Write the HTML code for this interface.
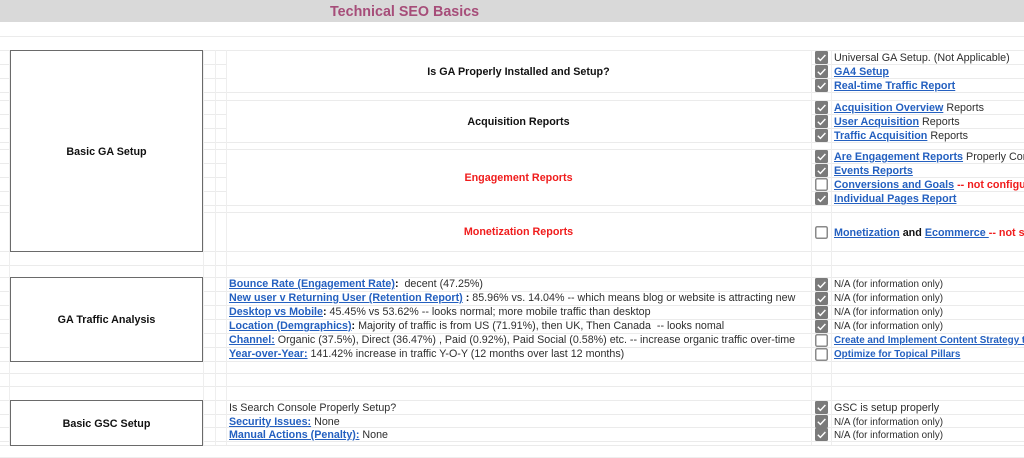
<!DOCTYPE html>
<html><head><meta charset="utf-8"><title>Technical SEO Basics</title>
<style>
html,body{margin:0;padding:0;width:1024px;height:458px;overflow:hidden;background:#fff}
body{position:relative;font-family:"Liberation Sans",sans-serif;font-size:10.75px;color:#2e2e2e;filter:blur(.3px)}
.h,.v,.box,.t,.c{position:absolute}
.h{height:1px;background:#ebebeb}
.v{width:1px;background:#eeeeee;top:50px;height:395px}
.box{left:10px;width:191px;border:1px solid #6a6a6a;background:#fff;text-align:center;font-weight:bold;color:#111;display:flex;align-items:center;justify-content:center;box-sizing:content-box}
.t{height:14px;line-height:14px;white-space:nowrap;margin-top:1px}
.l{left:229px;font-size:10.71px}
.r{left:834px}
.m{left:226px;width:585px;text-align:center;font-weight:bold;color:#111}
.s{font-size:9.87px;margin-top:2px}
a{color:#2460c0;text-decoration:underline;font-weight:bold}
.red{color:#f01c1c;font-weight:bold}
b{color:#111}
.c{left:815px;width:13px;height:13px}
</style></head><body>
<svg width="0" height="0" style="position:absolute"><defs>
<symbol id="on" viewBox="0 0 13 13"><rect width="13" height="13" rx="1.5" fill="#7a7a7a"/><path d="M2.8 6.8l2.6 2.6 5-5.4" fill="none" stroke="#fff" stroke-width="1.4"/></symbol>
<symbol id="off" viewBox="0 0 13 13"><rect x=".75" y=".75" width="11.5" height="11.5" rx="1.5" fill="#fff" stroke="#8a8a8a" stroke-width="1.5"/></symbol>
</defs></svg>

<div style="position:absolute;left:0;top:0;width:1024px;height:22px;background:#d9d9d9"></div>
<div class="t" style="left:330px;top:3px;height:16px;line-height:16px;font-size:14.3px;font-weight:bold;color:#a64d79">Technical SEO Basics</div>

<div class="h" style="left:0;width:1024px;top:36px"></div>
<div class="h" style="left:0;width:1024px;top:50px"></div>
<div class="h" style="left:0;width:226px;top:64px"></div><div class="h" style="left:811px;width:213px;top:64px"></div>
<div class="h" style="left:0;width:226px;top:78px"></div><div class="h" style="left:811px;width:213px;top:78px"></div>
<div class="h" style="left:0;width:1024px;top:92px"></div>
<div class="h" style="left:0;width:1024px;top:100px"></div>
<div class="h" style="left:0;width:226px;top:114px"></div><div class="h" style="left:811px;width:213px;top:114px"></div>
<div class="h" style="left:0;width:226px;top:128px"></div><div class="h" style="left:811px;width:213px;top:128px"></div>
<div class="h" style="left:0;width:1024px;top:142px"></div>
<div class="h" style="left:0;width:1024px;top:149px"></div>
<div class="h" style="left:0;width:226px;top:163px"></div><div class="h" style="left:811px;width:213px;top:163px"></div>
<div class="h" style="left:0;width:226px;top:177px"></div><div class="h" style="left:811px;width:213px;top:177px"></div>
<div class="h" style="left:0;width:226px;top:191px"></div><div class="h" style="left:811px;width:213px;top:191px"></div>
<div class="h" style="left:0;width:1024px;top:205px"></div>
<div class="h" style="left:0;width:1024px;top:212px"></div>
<div class="h" style="left:0;width:1024px;top:251px"></div>
<div class="h" style="left:0;width:1024px;top:265px"></div>
<div class="h" style="left:0;width:1024px;top:277px"></div>
<div class="h" style="left:0;width:1024px;top:291px"></div>
<div class="h" style="left:0;width:1024px;top:305px"></div>
<div class="h" style="left:0;width:1024px;top:319px"></div>
<div class="h" style="left:0;width:1024px;top:333px"></div>
<div class="h" style="left:0;width:1024px;top:347px"></div>
<div class="h" style="left:0;width:1024px;top:361px"></div>
<div class="h" style="left:0;width:1024px;top:373px"></div>
<div class="h" style="left:0;width:1024px;top:386px"></div>
<div class="h" style="left:0;width:1024px;top:400px"></div>
<div class="h" style="left:0;width:1024px;top:414px"></div>
<div class="h" style="left:0;width:1024px;top:427px"></div>
<div class="h" style="left:0;width:1024px;top:441px"></div>
<div class="h" style="left:0;width:1024px;top:445px"></div>
<div class="h" style="left:0;width:1024px;top:457px;background:#eee"></div>

<div class="v" style="left:9px"></div>
<div class="v" style="left:203px"></div>
<div class="v" style="left:215px"></div>
<div class="v" style="left:226px"></div>
<div class="v" style="left:811px"></div>
<div class="v" style="left:831px"></div>

<div class="box" style="top:50px;height:198px;padding-top:2px">Basic GA Setup</div>
<div class="box" style="top:277px;height:83px">GA Traffic Analysis</div>
<div class="box" style="top:400px;height:42px;padding-top:2px">Basic GSC Setup</div>

<div class="t m" style="top:64px">Is GA Properly Installed and Setup?</div>
<div class="t m" style="top:114px">Acquisition Reports</div>
<div class="t m red" style="top:170px">Engagement Reports</div>
<div class="t m red" style="top:224px">Monetization Reports</div>

<svg class="c" style="top:51px"><use href="#on"/></svg>
<svg class="c" style="top:65px"><use href="#on"/></svg>
<svg class="c" style="top:79px"><use href="#on"/></svg>
<svg class="c" style="top:101px"><use href="#on"/></svg>
<svg class="c" style="top:115px"><use href="#on"/></svg>
<svg class="c" style="top:129px"><use href="#on"/></svg>
<svg class="c" style="top:150px"><use href="#on"/></svg>
<svg class="c" style="top:164px"><use href="#on"/></svg>
<svg class="c" style="top:178px"><use href="#off"/></svg>
<svg class="c" style="top:192px"><use href="#on"/></svg>
<svg class="c" style="top:226px"><use href="#off"/></svg>
<svg class="c" style="top:278px"><use href="#on"/></svg>
<svg class="c" style="top:292px"><use href="#on"/></svg>
<svg class="c" style="top:306px"><use href="#on"/></svg>
<svg class="c" style="top:320px"><use href="#on"/></svg>
<svg class="c" style="top:334px"><use href="#off"/></svg>
<svg class="c" style="top:348px"><use href="#off"/></svg>
<svg class="c" style="top:401px"><use href="#on"/></svg>
<svg class="c" style="top:415px"><use href="#on"/></svg>
<svg class="c" style="top:428px"><use href="#on"/></svg>

<div class="t r" style="top:50px">Universal GA Setup. (Not Applicable)</div>
<div class="t r" style="top:64px"><a>GA4 Setup</a></div>
<div class="t r" style="top:78px"><a>Real-time Traffic Report</a></div>
<div class="t r" style="top:100px"><a>Acquisition Overview</a> Reports</div>
<div class="t r" style="top:114px"><a>User Acquisition</a> Reports</div>
<div class="t r" style="top:128px"><a>Traffic Acquisition</a> Reports</div>
<div class="t r" style="top:149px"><a>Are Engagement Reports</a> Properly Configured</div>
<div class="t r" style="top:163px"><a>Events Reports</a></div>
<div class="t r" style="top:177px"><a>Conversions and Goals</a> <span class="red">-- not configured</span></div>
<div class="t r" style="top:191px"><a>Individual Pages Report</a></div>
<div class="t r" style="top:225px"><a>Monetization</a> <b>and</b> <a>Ecommerce </a><span class="red">-- not setup</span></div>

<div class="t l" style="top:276px"><a>Bounce Rate (Engagement Rate)</a><b>:</b>&nbsp; decent (47.25%)</div>
<div class="t l" style="top:290px"><a>New user v Returning User (Retention Report)</a> <b>:</b> 85.96% vs. 14.04% -- which means blog or website is attracting new</div>
<div class="t l" style="top:304px"><a>Desktop vs Mobile</a><b>:</b> 45.45% vs 53.62% -- looks normal; more mobile traffic than desktop</div>
<div class="t l" style="top:318px"><a>Location (Demgraphics)</a><b>:</b> Majority of traffic is from US (71.91%), then UK, Then Canada &nbsp;-- looks nomal</div>
<div class="t l" style="top:332px"><a>Channel:</a> Organic (37.5%), Direct (36.47%) , Paid (0.92%), Paid Social (0.58%) etc. -- increase organic traffic over-time</div>
<div class="t l" style="top:346px"><a>Year-over-Year:</a> 141.42% increase in traffic Y-O-Y (12 months over last 12 months)</div>

<div class="t r s" style="top:276px">N/A (for information only)</div>
<div class="t r s" style="top:290px">N/A (for information only)</div>
<div class="t r s" style="top:304px">N/A (for information only)</div>
<div class="t r s" style="top:318px">N/A (for information only)</div>
<div class="t r s" style="top:332px"><a>Create and Implement Content Strategy to</a></div>
<div class="t r s" style="top:346px"><a>Optimize for Topical Pillars</a></div>

<div class="t l" style="top:400px">Is Search Console Properly Setup?</div>
<div class="t l" style="top:414px"><a>Security Issues:</a> None</div>
<div class="t l" style="top:427px"><a>Manual Actions (Penalty):</a> None</div>

<div class="t r" style="top:400px">GSC is setup properly</div>
<div class="t r s" style="top:414px">N/A (for information only)</div>
<div class="t r s" style="top:427px">N/A (for information only)</div>
</body></html>
